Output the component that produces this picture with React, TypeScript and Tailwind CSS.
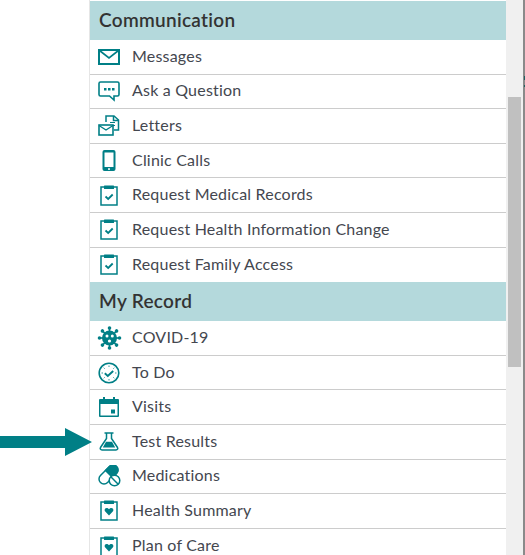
const TEAL = '#007f86';

function Mail() {
  return (
    <svg width="22" height="16" viewBox="0 0 22 16" fill="none" stroke={TEAL} strokeWidth="2">
      <rect x="1" y="1" width="20" height="14" />
      <path d="M1.500 1.500 11 9l9.500-7.500" strokeWidth="1.600" />
    </svg>
  );
}

function Bubble() {
  return (
    <svg width="22" height="21" viewBox="0 0 22 21" fill="none">
      <path d="M2.500 1h17A1.500 1.500 0 0 1 21 2.500v11a1.500 1.500 0 0 1-1.500 1.500H16v4l-4.500-4h-9A1.500 1.500 0 0 1 1 13.500v-11A1.500 1.500 0 0 1 2.500 1z" stroke={TEAL} strokeWidth="1.600" />
      <rect x="6" y="7" width="2.500" height="2.500" fill={TEAL} />
      <rect x="10" y="7" width="2.500" height="2.500" fill={TEAL} />
      <rect x="14" y="7" width="2.500" height="2.500" fill={TEAL} />
    </svg>
  );
}

function LetterIcon() {
  return (
    <svg width="22" height="21" viewBox="0 0 22 21" fill="none" stroke={TEAL} strokeWidth="1.500">
      <path d="M8 7V1h8l4.500 4v10H16" />
      <path d="M15.500 1v4.500h5" />
      <path d="M12 7.500h5M13.500 10.500h3.500" strokeWidth="1.200" />
      <rect x="1" y="10" width="14" height="10" fill="#fff" strokeWidth="1.600" />
      <path d="M1 10.500 8 15l7-4.500" strokeWidth="1.400" />
    </svg>
  );
}

function Phone() {
  return (
    <svg width="14" height="21" viewBox="0 0 14 21">
      <rect x="0.500" y="0" width="13" height="21" rx="2" fill={TEAL} />
      <rect x="2.500" y="2.500" width="9" height="14.500" fill="#fff" />
      <rect x="6" y="18.300" width="2" height="1.500" fill="#fff" />
    </svg>
  );
}

function Clipboard({ heart }: { heart?: boolean }) {
  return (
    <svg width="18" height="21" viewBox="0 0 18 21" fill="none">
      <rect x="1" y="2" width="16" height="18" stroke={TEAL} strokeWidth="1.500" />
      <rect x="4" y="0.500" width="10" height="3.500" rx="0.500" fill={TEAL} />
      {heart ? (
        <path d="M9 15.500 5 11.300C4 9.800 5 8 6.700 8 7.800 8 8.500 8.600 9 9.300 9.500 8.600 10.200 8 11.300 8 13 8 14 9.800 13 11.300z" fill={TEAL} />
      ) : (
        <path d="m5.500 11.500 2.700 2.500 4.500-4.500" stroke={TEAL} strokeWidth="1.800" />
      )}
    </svg>
  );
}

function Virus() {
  const spikes = [0, 45, 90, 135, 180, 225, 270, 315];
  return (
    <svg width="25" height="24" viewBox="0 0 24 24" fill={TEAL}>
      {spikes.map(a => (
        <g key={a} transform={`rotate(${a} 12 12)`}>
          <rect x="11.200" y="2" width="1.600" height="5" />
          <circle cx="12" cy="2" r="1.800" />
        </g>
      ))}
      <circle cx="12" cy="12" r="7.500" />
      <circle cx="9.500" cy="10" r="1.500" fill="#fff" />
      <circle cx="14.800" cy="10" r="1.500" fill="#fff" />
      <circle cx="12" cy="15" r="1.600" fill="#fff" />
    </svg>
  );
}

function ClockCheck() {
  return (
    <svg width="22" height="22" viewBox="0 0 22 22" fill="none" stroke={TEAL}>
      <circle cx="11" cy="11" r="9.800" strokeWidth="1.600" />
      <path d="M11 3.500v1.500M11 17v1.500M3.500 11H5M17 11h1.500M5.700 5.700l1 1M15.300 15.300l1 1M5.700 16.300l1-1M15.300 6.700l1-1" strokeWidth="0.800" />
      <path d="m6.800 11.300 3 2.700 5.400-5" strokeWidth="1.900" />
    </svg>
  );
}

function Calendar() {
  return (
    <svg width="20" height="20" viewBox="0 0 20 20">
      <path d="M1 2h3V0h2v2h8V0h2v2h3a1 1 0 0 1 1 1v16a1 1 0 0 1-1 1H1a1 1 0 0 1-1-1V3a1 1 0 0 1 1-1z" fill={TEAL} />
      <rect x="1.500" y="7" width="17" height="11.500" fill="#fff" />
      <rect x="12" y="12.500" width="4" height="4" fill={TEAL} />
    </svg>
  );
}

function Flask() {
  return (
    <svg width="20" height="19" viewBox="0 0 20 19" fill="none">
      <path d="M5.500 1h9M7.500 1v5.500L1.500 15.500C.8 16.800 1.500 18 3 18h14c1.500 0 2.200-1.200 1.500-2.500L12.500 6.500V1" stroke={TEAL} strokeWidth="1.500" />
      <path d="M7 9.800h6l3.200 5.700H3.800z" fill={TEAL} />
    </svg>
  );
}

function Pills() {
  return (
    <svg width="23" height="22" viewBox="0 0 23 22" fill="none">
      <g transform="rotate(-45 10.500 9.500)">
        <rect x="-0.850" y="4.500" width="22.700" height="10" rx="5" stroke={TEAL} strokeWidth="1.500" />
        <path d="M10.500 3.800h6.350a5.700 5.700 0 0 1 0 11.400H10.500z" fill={TEAL} />
      </g>
      <circle cx="16.500" cy="15.500" r="5.300" fill="#fff" stroke={TEAL} strokeWidth="1.500" />
      <path d="m12.800 11.800 7.400 7.400" stroke={TEAL} strokeWidth="1.500" />
    </svg>
  );
}

type Item = { label: string; icon: React.ReactNode };

const communication: Item[] = [
  { label: 'Messages', icon: <Mail /> },
  { label: 'Ask a Question', icon: <Bubble /> },
  { label: 'Letters', icon: <LetterIcon /> },
  { label: 'Clinic Calls', icon: <Phone /> },
  { label: 'Request Medical Records', icon: <Clipboard /> },
  { label: 'Request Health Information Change', icon: <Clipboard /> },
  { label: 'Request Family Access', icon: <Clipboard /> },
];

const myRecord: Item[] = [
  { label: 'COVID-19', icon: <Virus /> },
  { label: 'To Do', icon: <ClockCheck /> },
  { label: 'Visits', icon: <Calendar /> },
  { label: 'Test Results', icon: <Flask /> },
  { label: 'Medications', icon: <Pills /> },
  { label: 'Health Summary', icon: <Clipboard heart /> },
  { label: 'Plan of Care', icon: <Clipboard heart /> },
];

function Section({ title, items }: { title: string; items: Item[] }) {
  return (
    <div>
      <div className="h-[39px] flex items-center pl-[9px] bg-[#b4d9dc] text-[19px] font-semibold tracking-[0.3px] text-[#333]">
        {title}
      </div>
      {items.map((item, i) => (
        <div
          key={item.label}
          className={`h-[34.6px] flex items-center ${i < items.length - 1 ? 'border-b border-[#cccccc]' : ''}`}
        >
          <div className="w-[42px] shrink-0 flex justify-center pr-[4px]">{item.icon}</div>
          <span className="text-[16px] pb-[2px] text-[#44474f] tracking-[0.2px]">{item.label}</span>
        </div>
      ))}
    </div>
  );
}

export default function App() {
  return (
    <div className="relative w-[525px] h-[555px] overflow-hidden bg-white flex font-['Lato',sans-serif]">
      <div className="w-[89px] shrink-0" />

      <div className="w-[417px] shrink-0 pt-px border-l border-[#e6e6e6]">
        <Section title="Communication" items={communication} />
        <Section title="My Record" items={myRecord} />
      </div>

      {/* scrollbar */}
      <div className="w-[17px] shrink-0 bg-[#f0f0f0] px-[2px] pt-[97px]">
        <div className="h-[270px] bg-[#c0c0c0]" />
      </div>
      <div className="w-[2px] shrink-0 bg-[#8a8a8a]" />

      {/* sliver of the page behind, at the right edge */}
      <div className="absolute right-0 top-[76px] w-px h-[4px] bg-[#1f5f5f]" />
      <div className="absolute right-0 top-[85px] w-px h-[2px] bg-[#1f5f5f]" />

      {/* pointer arrow */}
      <svg className="absolute left-0 top-[428px]" width="93" height="28" viewBox="0 0 93 28">
        <path d="M0 8h65V0l27 14-27 14v-8H0z" fill={TEAL} />
      </svg>
    </div>
  );
}
